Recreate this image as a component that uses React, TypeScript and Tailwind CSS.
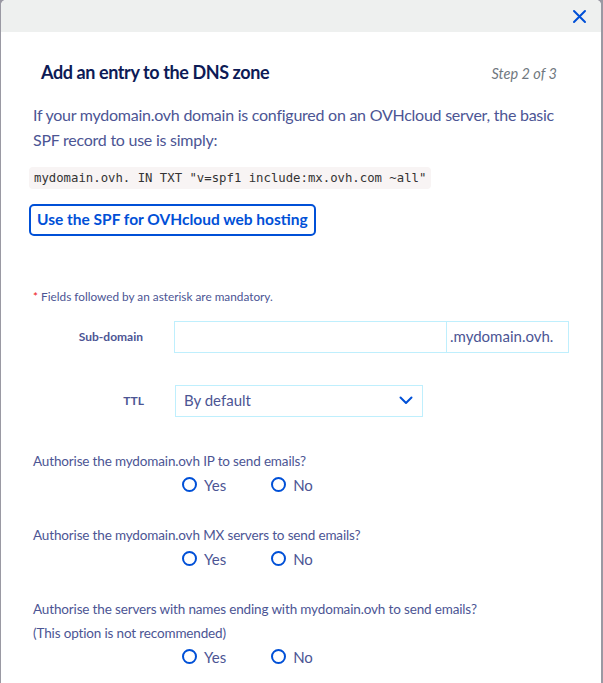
import React from 'react';

const Radio = ({ label }: { label: string }) => (
  <label className="flex items-center gap-[7px]">
    <span className="w-[15px] h-[15px] rounded-full border-2 border-[#0050d7] bg-white" />
    <span>{label}</span>
  </label>
);

const RadioRow = () => (
  <div className="flex items-center gap-[45px] pl-[149px] text-[15px] leading-[24px] tracking-normal">
    <Radio label="Yes" />
    <Radio label="No" />
  </div>
);

const App = () => {
  const questions = [
    ['Authorise the mydomain.ovh IP to send emails?'],
    ['Authorise the mydomain.ovh MX servers to send emails?'],
    ['Authorise the servers with names ending with mydomain.ovh to send emails?', '(This option is not recommended)'],
  ];

  return (
    <div className="w-[603px] h-[683px] bg-[#9a99a3] overflow-hidden" style={{ fontFamily: 'Lato, "Open Sans", sans-serif' }}>
      <div className="ml-[1px] w-[600px] h-[700px] bg-white rounded-t-[5px] overflow-hidden">
        <div className="h-[32px] bg-[#eef0ef] flex items-center justify-end pr-[14px]">
          <svg width="15" height="15" viewBox="0 0 15 15" fill="none" stroke="#0050d7" strokeWidth="2" strokeLinecap="round">
            <path d="M2 2 L13 13 M13 2 L2 13" />
          </svg>
        </div>

        <div className="px-[32px] text-[#4c5594]">
          <div className="flex items-baseline justify-between pl-[8px] pr-[12px] pt-[27px]">
            <h1 className="text-[18px] font-bold tracking-[-0.4px] text-[#0d1b56]">Add an entry to the DNS zone</h1>
            <span className="text-[14.5px] italic text-[#707880]">Step 2 of 3</span>
          </div>

          <p className="mt-[16px] text-[16px] leading-[25px] tracking-[-0.25px]">
            If your mydomain.ovh domain is configured on an OVHcloud server, the basic SPF record to use is simply:
          </p>

          <div className="mt-[15px] -ml-[4px] inline-block bg-[#f8f4f4] rounded-[4px] px-[5px] py-[2px] text-[12.3px] leading-[18px] text-[#333] whitespace-pre" style={{ fontFamily: '"DejaVu Sans Mono", monospace' }}>
            mydomain.ovh. IN TXT "v=spf1 include:mx.ovh.com ~all"
          </div>

          <div>
            <button className="mt-[15px] -ml-[4px] h-[32px] px-[6px] border-2 border-[#0050d7] rounded-[5px] text-[15.5px] font-bold text-[#0050d7]">
              Use the SPF for OVHcloud web hosting
            </button>
          </div>

          <p className="mt-[52px] text-[11.8px]">
            <span className="text-[#e11]">*</span> Fields followed by an asterisk are mandatory.
          </p>

          <div className="flex items-center mt-[15px]">
            <span className="w-[111px] text-right text-[12px] font-bold">Sub-domain</span>
            <div className="ml-[31px] flex h-[32px] border border-[#bfeffd]">
              <div className="w-[271px]" />
              <div className="w-[122px] border-l border-[#bfeffd] flex items-center pl-[3px] text-[15px]">.mydomain.ovh.</div>
            </div>
          </div>

          <div className="flex items-center mt-[32px]">
            <span className="w-[111px] text-right text-[12px] font-bold">TTL</span>
            <div className="ml-[31px] w-[248px] h-[32px] border border-[#bfeffd] flex items-center justify-between pl-[8px] pr-[9px] text-[15px]">
              <span>By default</span>
              <svg width="14" height="9" viewBox="0 0 14 9" fill="none" stroke="#0050d7" strokeWidth="2" strokeLinecap="round" strokeLinejoin="round">
                <path d="M1.5 1.5 L7 7 L12.5 1.5" />
              </svg>
            </div>
          </div>

          <div className="mt-[32px] text-[13.5px] leading-[24px] tracking-[-0.15px] flex flex-col gap-[26px]">
            {questions.map((q, i) => (
              <div key={i}>
                {q.map((line) => (
                  <p key={line}>{line}</p>
                ))}
                <RadioRow />
              </div>
            ))}
          </div>
        </div>
      </div>
    </div>
  );
};

export default App;
